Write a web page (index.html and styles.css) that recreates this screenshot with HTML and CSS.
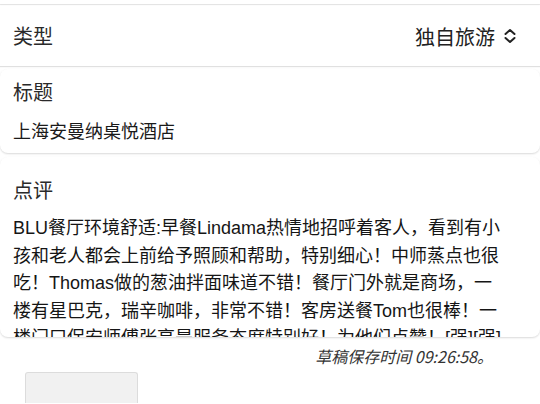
FILE: index.html
```html
<!DOCTYPE html>
<html lang="zh-CN">
  <head>
    <meta charset="UTF-8" />
    <meta name="viewport" content="width=device-width, initial-scale=1.0" />
    <title>写点评</title>
    <link rel="stylesheet" href="styles.css">
  </head>
  <body>
    <div class="prev"></div>
    <div class="row">
      <span class="label">类型</span>
      <span class="select">
        独自旅游
        <svg class="chevron" width="14" height="16" viewBox="0 0 14 16">
          <path d="M2.5 6 L7 2 L11.5 6 M2.5 10 L7 14 L11.5 10" fill="none" stroke="#222" stroke-width="2" stroke-linecap="round" stroke-linejoin="round" />
        </svg>
      </span>
    </div>
    <div class="card">
      <div class="label">标题</div>
      <div class="value">上海安曼纳桌悦酒店</div>
    </div>
    <div class="card review">
      <div class="label">点评</div>
      <div class="text">BLU餐厅环境舒适:早餐Lindama热情地招呼着客人，看到有小孩和老人都会上前给予照顾和帮助，特别细心！中师蒸点也很吃！Thomas做的葱油拌面味道不错！餐厅门外就是商场，一楼有星巴克，瑞辛咖啡，非常不错！客房送餐Tom也很棒！一楼门口保安师傅张亮是服务态度特别好！为他们点赞！[强][强]</div>
    </div>
    <p class="draft">草稿保存时间 09:26:58。</p>
    <div class="photo"></div>
  </body>
</html>
```

FILE: styles.css
```css
body {
  margin: 0;
  padding: 0;
  background-color: white;
  color: #222;
  font-family: "Noto Sans CJK SC", "Noto Sans", sans-serif;
}
.prev {
  height: 4px;
  box-shadow: 0 1px 1px rgba(0, 0, 0, 0.12);
}
.row {
  margin-top: 2px;
  height: 60px;
  padding: 0 13px;
  display: flex;
  justify-content: space-between;
  align-items: center;
  box-shadow: 0 1px 1px rgba(0, 0, 0, 0.12);
}
.label {
  font-size: 20px;
  line-height: 26px;
  color: #2a2a2a;
}
.select {
  display: flex;
  align-items: center;
  gap: 8px;
  font-size: 20px;
  margin-right: 10px;
}
.card {
  margin-top: 3px;
  padding: 10px 13px;
  border-radius: 8px;
  box-shadow: 0 1px 2px rgba(0, 0, 0, 0.15);
}
.value {
  margin-top: 12px;
  font-size: 18px;
  line-height: 26px;
  color: #1a1a1a;
}
.review {
  margin-top: 4px;
  padding: 20px 35px 0 13px;
}
.text {
  margin-top: 12px;
  height: 122px;
  overflow: hidden;
  font-family: "Liberation Sans", "Noto Sans CJK SC", sans-serif;
  font-size: 18px;
  line-height: 27.5px;
  color: #151515;
}
.draft {
  margin: 9px 47px 0 0;
  text-align: right;
  font-style: italic;
  font-size: 16px;
  line-height: 20px;
  color: #333;
}
.photo {
  margin: 6px 0 0 25px;
  width: 111px;
  height: 30px;
  background-color: #f1f1f1;
  border: 1px solid #dcdcdc;
  border-bottom: none;
  border-radius: 3px 3px 0 0;
}
```
